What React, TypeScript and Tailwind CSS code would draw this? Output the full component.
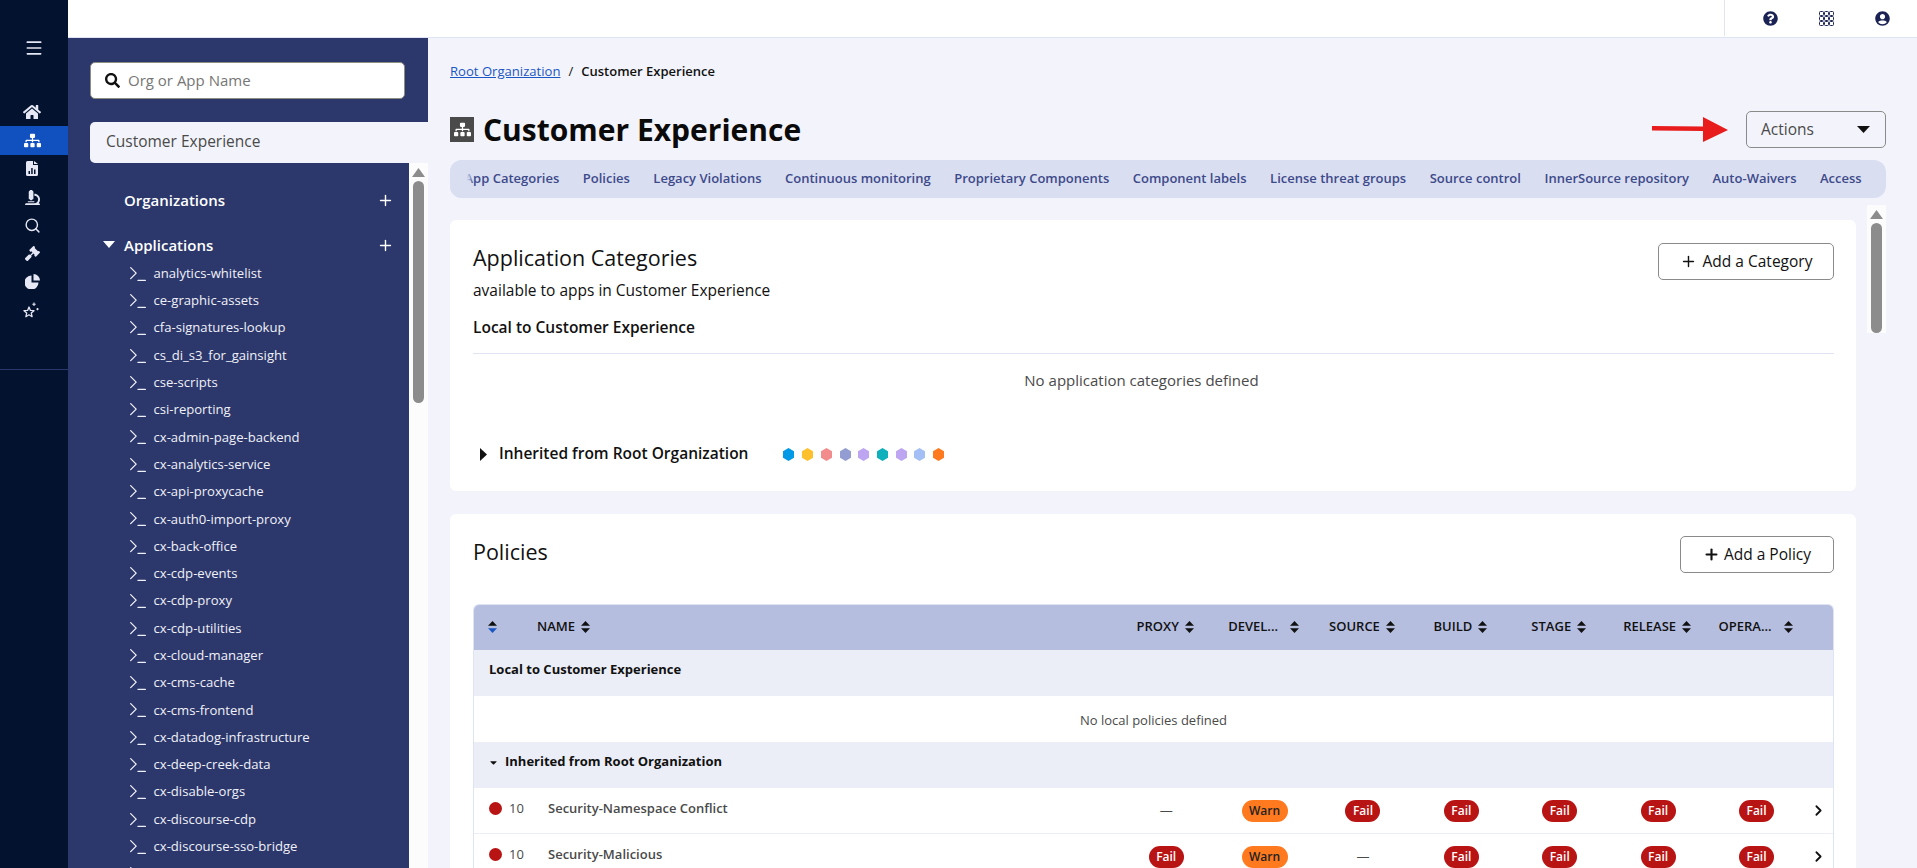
import { Menu, Plus, Search, Terminal, ChevronRight } from 'lucide-react';
import { FaHome, FaSitemap, FaMicroscope, FaGavel, FaSearch, FaQuestionCircle, FaUserCircle, FaCaretDown } from 'react-icons/fa';

const apps = [
  'analytics-whitelist',
  'ce-graphic-assets',
  'cfa-signatures-lookup',
  'cs_di_s3_for_gainsight',
  'cse-scripts',
  'csi-reporting',
  'cx-admin-page-backend',
  'cx-analytics-service',
  'cx-api-proxycache',
  'cx-auth0-import-proxy',
  'cx-back-office',
  'cx-cdp-events',
  'cx-cdp-proxy',
  'cx-cdp-utilities',
  'cx-cloud-manager',
  'cx-cms-cache',
  'cx-cms-frontend',
  'cx-datadog-infrastructure',
  'cx-deep-creek-data',
  'cx-disable-orgs',
  'cx-discourse-cdp',
  'cx-discourse-sso-bridge',
  '',
];

const tabs = [
  'App Categories',
  'Policies',
  'Legacy Violations',
  'Continuous monitoring',
  'Proprietary Components',
  'Component labels',
  'License threat groups',
  'Source control',
  'InnerSource repository',
  'Auto-Waivers',
  'Access',
];

const hexColors = ['#0099e6', '#ffc02e', '#f28b8b', '#939dd1', '#bda5f2', '#0fb0bb', '#bda5f2', '#a3bff5', '#ff7a1f'];

const stages = ['PROXY', 'DEVEL...', 'SOURCE', 'BUILD', 'STAGE', 'RELEASE', 'OPERA...'];

const policies = [
  { name: 'Security-Namespace Conflict', actions: ['-', 'Warn', 'Fail', 'Fail', 'Fail', 'Fail', 'Fail'] },
  { name: 'Security-Malicious', actions: ['Fail', 'Warn', '-', 'Fail', 'Fail', 'Fail', 'Fail'] },
];

const FileChartIcon = () => (
  <svg width="12" height="15" viewBox="0 0 12 15" fill="#e6e8f5">
    <path fillRule="evenodd" d="M1.5 0H7v4h5v9.5a1.5 1.5 0 0 1-1.5 1.5h-9A1.5 1.5 0 0 1 0 13.5v-12A1.5 1.5 0 0 1 1.5 0ZM8 0l4 3H8V0ZM2.500 10h1.500v3H2.500v-3Zm2.700-3h1.500v6H5.200V7Zm2.800 1.500h1.500V13H8V8.500Z" />
  </svg>
);

const PieIcon = () => (
  <svg width="15" height="15" viewBox="0 0 15 15" fill="#e6e8f5">
    <path d="M6.500 1.500V8.500H13.500A7 7 0 1 1 6.500 1.500Z" />
    <path d="M8.500 0A6.500 6.500 0 0 1 15 6.500H8.500V0Z" />
  </svg>
);

const StarSparkIcon = () => (
  <svg width="16" height="16" viewBox="0 0 16 16" fill="none" stroke="#e6e8f5">
    <path strokeWidth="1.300" strokeLinejoin="round" d="M6 5 7.400 8.400l3.600.3-2.700 2.400.8 3.600L6 12.800l-3.100 1.900.8-3.600L1 8.700l3.600-.3L6 5Z" />
    <path strokeWidth="1.100" d="M11 .5v3.500M9.300 2.200h3.400M14.500 6v2.200M13.400 7.100h2.200" />
  </svg>
);

const GridIcon = () => (
  <svg width="15" height="15" viewBox="0 0 15 15" fill="none" stroke="#1b2354" strokeWidth="1">
    {[0.5, 5.500, 10.500].map((y) =>
      [0.5, 5.500, 10.500].map((x) => <rect key={`${x}-${y}`} x={x} y={y} width="4" height="4" rx="1" />),
    )}
  </svg>
);

const SortIcon = ({ active = false }: { active?: boolean }) => (
  <svg width="9" height="12" viewBox="0 0 9 12" className="shrink-0">
    <path d="M4.500 0 9 4.800H0L4.500 0Z" fill="#111" />
    <path d="M4.500 12 0 7.200h9L4.500 12Z" fill={active ? '#1a56c4' : '#111'} />
  </svg>
);

const Hexagon = ({ color }: { color: string }) => (
  <svg width="11" height="13" viewBox="0 0 11 13">
    <path d="M5.500 0 11 3.200v6.600L5.500 13 0 9.800V3.200L5.500 0Z" fill={color} />
  </svg>
);

const ScrollBar = ({ thumb }: { thumb: string }) => (
  <div className="w-[19px] shrink-0 bg-[#fcfcfc] flex flex-col items-center pt-[5px]">
    <svg width="13" height="9" viewBox="0 0 13 9">
      <path d="M6.500 0 13 9H0L6.500 0Z" fill="#8c8c8c" />
    </svg>
    <div className={`w-[11px] mt-[4px] rounded-full bg-[#8c8c8c] ${thumb}`} />
  </div>
);

const Badge = ({ value }: { value: string }) => {
  if (value === '-') return <span className="text-[13px] text-[#4a4a4a]">—</span>;
  if (value === 'Warn')
    return (
      <span className="h-[22px] w-[46px] rounded-full bg-[#ff7a1f] text-[#222] text-[12px] font-semibold flex items-center justify-center">
        Warn
      </span>
    );
  return (
    <span className="h-[22px] w-[35px] rounded-full bg-[#b91414] text-white text-[12px] font-semibold flex items-center justify-center">
      Fail
    </span>
  );
};

const navClass = 'h-[28.300px] flex items-center justify-center text-[#e6e8f5]';

const SideNav = () => (
  <nav className="w-[68px] shrink-0 bg-[#03122e] flex flex-col">
    <div className="h-[98px] pt-[38px] flex justify-center">
      <Menu size={20} color="#e6e8f5" />
    </div>
    <div className={`${navClass} pr-[4px]`}><FaHome size={18} /></div>
    <div className={`${navClass} bg-[#1050bf] pr-[4px] text-white`}><FaSitemap size={17} /></div>
    <div className={`${navClass} pr-[4px]`}><FileChartIcon /></div>
    <div className={`${navClass} pr-[4px]`}><FaMicroscope size={15} /></div>
    <div className={`${navClass} pr-[4px]`}><Search size={17} strokeWidth={2} /></div>
    <div className={`${navClass} pr-[4px]`}><FaGavel size={15} /></div>
    <div className={`${navClass} pr-[4px]`}><PieIcon /></div>
    <div className={`${navClass} pr-[6px]`}><StarSparkIcon /></div>
    <div className="mt-[45px] h-px bg-[#2c376b]" />
  </nav>
);

const Sidebar = () => (
  <aside className="w-[360px] shrink-0 flex flex-col min-h-0 bg-[#f3f4fb]">
    <div className="bg-[#2c376b] pt-[24px] px-[22px] pb-[23px]">
      <div className="h-[37px] w-[315px] bg-white rounded-[5px] border border-[#8d8d80] flex items-center pl-[14px] gap-[8px] pb-[1px]">
        <FaSearch size={15} color="#111" />
        <span className="text-[15px] text-[#767676]">Org or App Name</span>
      </div>
    </div>
    <div className="bg-[#2c376b]">
      <div className="ml-[22px] h-[41px] bg-[#f3f4fb] rounded-l-[5px] flex items-center pl-[16px] pb-[1px] text-[15.500px] font-medium text-[#4a4a4a]">
        Customer Experience
      </div>
    </div>
    <div className="flex flex-1 min-h-0 overflow-hidden">
      <div className="flex-1 bg-[#2c376b] text-white overflow-hidden">
        <div className="mt-[24px] h-[26px] flex items-center justify-between pl-[56px] pr-[15px] text-[15px] font-semibold">
          Organizations
          <Plus size={17} strokeWidth={2} />
        </div>
        <div className="relative mt-[19px] h-[26px] flex items-center justify-between pl-[56px] pr-[15px] text-[15px] font-semibold">
          <svg width="12" height="7" viewBox="0 0 12 7" className="absolute left-[35px] top-[9px]">
            <path d="M0 0h12L6 7 0 0Z" fill="#fff" />
          </svg>
          Applications
          <Plus size={17} strokeWidth={2} />
        </div>
        <ul className="mt-[2px]">
          {apps.map((app, i) => (
            <li key={i} className="h-[27.300px] flex items-center pl-[59px] gap-[4.500px] text-[13.100px] text-[#f0f1f8]">
              <Terminal size={22} strokeWidth={1.400} />
              {app}
            </li>
          ))}
        </ul>
      </div>
      <ScrollBar thumb="h-[222px]" />
    </div>
  </aside>
);

const PolicyTable = () => (
  <div className="mt-[31px] border-x border-t border-[#dfe3f3] rounded-t-[6px] overflow-hidden">
    <div className="h-[45px] pb-[1px] bg-[#b6bee0] grid grid-cols-[643px_repeat(7,98.400px)_1fr] items-center text-[13px] font-semibold text-[#111]">
      <div className="flex items-center pl-[14px]">
        <SortIcon active />
        <div className="ml-[40px] flex items-center gap-[6px]">
          NAME
          <SortIcon />
        </div>
      </div>
      {stages.map((stage) => (
        <div
          key={stage}
          className={`flex items-center justify-center pr-[2px] ${stage.endsWith('...') ? 'gap-[12px]' : 'gap-[6px]'}`}
        >
          {stage}
          <SortIcon />
        </div>
      ))}
    </div>
    <div className="h-[46px] pb-[6px] bg-[#ebeef7] flex items-center pl-[15px] text-[13px] font-bold text-[#111]">
      Local to Customer Experience
    </div>
    <div className="h-[46px] pt-[4px] bg-white flex items-center justify-center text-[13px] text-[#4a4a4a]">
      No local policies defined
    </div>
    <div className="h-[46px] pb-[6px] bg-[#ebeef7] flex items-center pl-[14px] gap-[6px] text-[13px] font-bold text-[#111]">
      <FaCaretDown size={11} />
      Inherited from Root Organization
    </div>
    {policies.map((policy) => (
      <div key={policy.name} className="h-[46px] bg-white border-b border-[#ebeef7] grid grid-cols-[643px_repeat(7,98.400px)_1fr] items-center">
        <div className="flex items-center pl-[15px] pb-[4px] text-[13px] font-semibold text-[#4a4a4a]">
          <span className="w-[13px] h-[13px] rounded-full bg-[#b91414]" />
          <span className="ml-[7px] w-[39px] font-normal">10</span>
          {policy.name}
        </div>
        {policy.actions.map((action, i) => (
          <div key={i} className="flex justify-center">
            <Badge value={action} />
          </div>
        ))}
        <div className="flex justify-center pr-[2px]">
          <ChevronRight size={17} strokeWidth={2.500} color="#111" />
        </div>
      </div>
    ))}
  </div>
);

export default function App() {
  return (
    <div className="h-[868px] w-full flex overflow-hidden bg-[#f3f4fb] font-['Open_Sans',sans-serif]">
      <SideNav />
      <div className="flex-1 min-w-0 flex flex-col">
        <header className="h-[38px] shrink-0 bg-white border-b border-[#dfe3f3] flex justify-end">
          <div className="w-[193px] h-[36px] border-l border-[#dfe3f3] flex items-center pl-[38px] gap-[41px]">
            <FaQuestionCircle size={15} color="#1b2354" />
            <GridIcon />
            <FaUserCircle size={15} color="#1b2354" />
          </div>
        </header>
        <div className="flex-1 min-h-0 flex">
          <Sidebar />
          <main className="flex-1 min-w-0 flex flex-col pl-[22px] pr-[31px] overflow-hidden">
            <div className="mt-[24px] h-[20px] flex items-center text-[13px] text-[#111]">
              <a className="text-[#1a56c4] underline text-[13.100px]">Root Organization</a>
              <span className="mx-[8px]">/</span>
              <span className="font-semibold">Customer Experience</span>
            </div>
            <div className="mt-[29px] h-[37px] shrink-0 flex items-center justify-between">
              <div className="flex items-center gap-[9px]">
                <div className="w-[24px] h-[25px] bg-[#4a4a4a] flex items-center justify-center">
                  <FaSitemap size={17} color="#fff" />
                </div>
                <h1 className="text-[30px] font-bold text-[#0a0a0a] mb-[1px]">Customer Experience</h1>
              </div>
              <div className="flex items-center gap-[18px]">
                <svg width="76" height="25" viewBox="0 0 76 25">
                  <path d="M0 9 51 9.500V0L76 13 51 25V14L0 13.500V9Z" fill="#e81c1c" />
                </svg>
                <button className="w-[140px] h-[37px] rounded-[5px] border border-[#8a8a8a] flex items-center justify-between pl-[14px] pr-[15px] text-[15.500px] text-[#4a4a4a]">
                  Actions
                  <svg width="13" height="7" viewBox="0 0 13 7">
                    <path d="M0 0h13L6.500 7 0 0Z" fill="#111" />
                  </svg>
                </button>
              </div>
            </div>
            <div className="relative mt-[12px] h-[38px] shrink-0 bg-[#dadef1] rounded-[12px] overflow-hidden flex items-center gap-[23.500px] pl-[14.500px] text-[13px] font-semibold text-[#3d4a8a] whitespace-nowrap">
              {tabs.map((tab) => (
                <span key={tab}>{tab}</span>
              ))}
              <div className="absolute left-0 top-0 h-full w-[24px] bg-gradient-to-r from-[#dadef1] from-70% to-transparent" />
            </div>
            <div className="mt-[7px] flex-1 min-h-0 flex overflow-hidden">
              <div className="w-[1406px] shrink-0 pt-[15px] flex flex-col gap-[23px]">
                <section className="h-[271px] shrink-0 bg-white rounded-[6px] pl-[23px] pr-[22px] pt-[23px]">
                  <div className="flex justify-between">
                    <h2 className="text-[21.500px] leading-[28px] mt-px text-[#111]">Application Categories</h2>
                    <button className="w-[176px] h-[37px] rounded-[5px] border border-[#8a8a8a] flex items-center justify-center gap-[6px] text-[15.500px] font-medium text-[#111]">
                      <Plus size={17} strokeWidth={2} />
                      Add a Category
                    </button>
                  </div>
                  <p className="text-[15.500px] leading-[20px] text-[#111]">available to apps in Customer Experience</p>
                  <p className="mt-[17px] text-[15.500px] leading-[20px] font-semibold text-[#111]">Local to Customer Experience</p>
                  <div className="mt-[16px] h-px bg-[#dfe3f3]" />
                  <p className="mt-[16px] pr-[24px] text-[15px] leading-[20px] text-center text-[#4a4a4a]">No application categories defined</p>
                  <div className="mt-[54px] h-[20px] flex items-center text-[15.500px] font-semibold text-[#111]">
                    <svg width="7" height="13" viewBox="0 0 7 13" className="ml-[7px]">
                      <path d="M0 0 7 6.500 0 13V0Z" fill="#111" />
                    </svg>
                    <span className="ml-[12px]">Inherited from Root Organization</span>
                    <div className="ml-[35px] flex gap-[7.700px]">
                      {hexColors.map((color, i) => (
                        <Hexagon key={i} color={color} />
                      ))}
                    </div>
                  </div>
                </section>
                <section className="flex-1 bg-white rounded-[6px] pl-[23px] pr-[22px] pt-[22px]">
                  <div className="flex items-center justify-between">
                    <h2 className="text-[21.500px] leading-[28px] mb-[5px] text-[#111]">Policies</h2>
                    <button className="w-[154px] h-[37px] rounded-[5px] border border-[#8a8a8a] flex items-center justify-center gap-[4px] text-[15.500px] font-medium text-[#111]">
                      <Plus size={17} strokeWidth={3} />
                      Add a Policy
                    </button>
                  </div>
                  <PolicyTable />
                </section>
              </div>
              <div className="ml-[11px]">
                <ScrollBar thumb="h-[110px]" />
              </div>
            </div>
          </main>
        </div>
      </div>
    </div>
  );
}
